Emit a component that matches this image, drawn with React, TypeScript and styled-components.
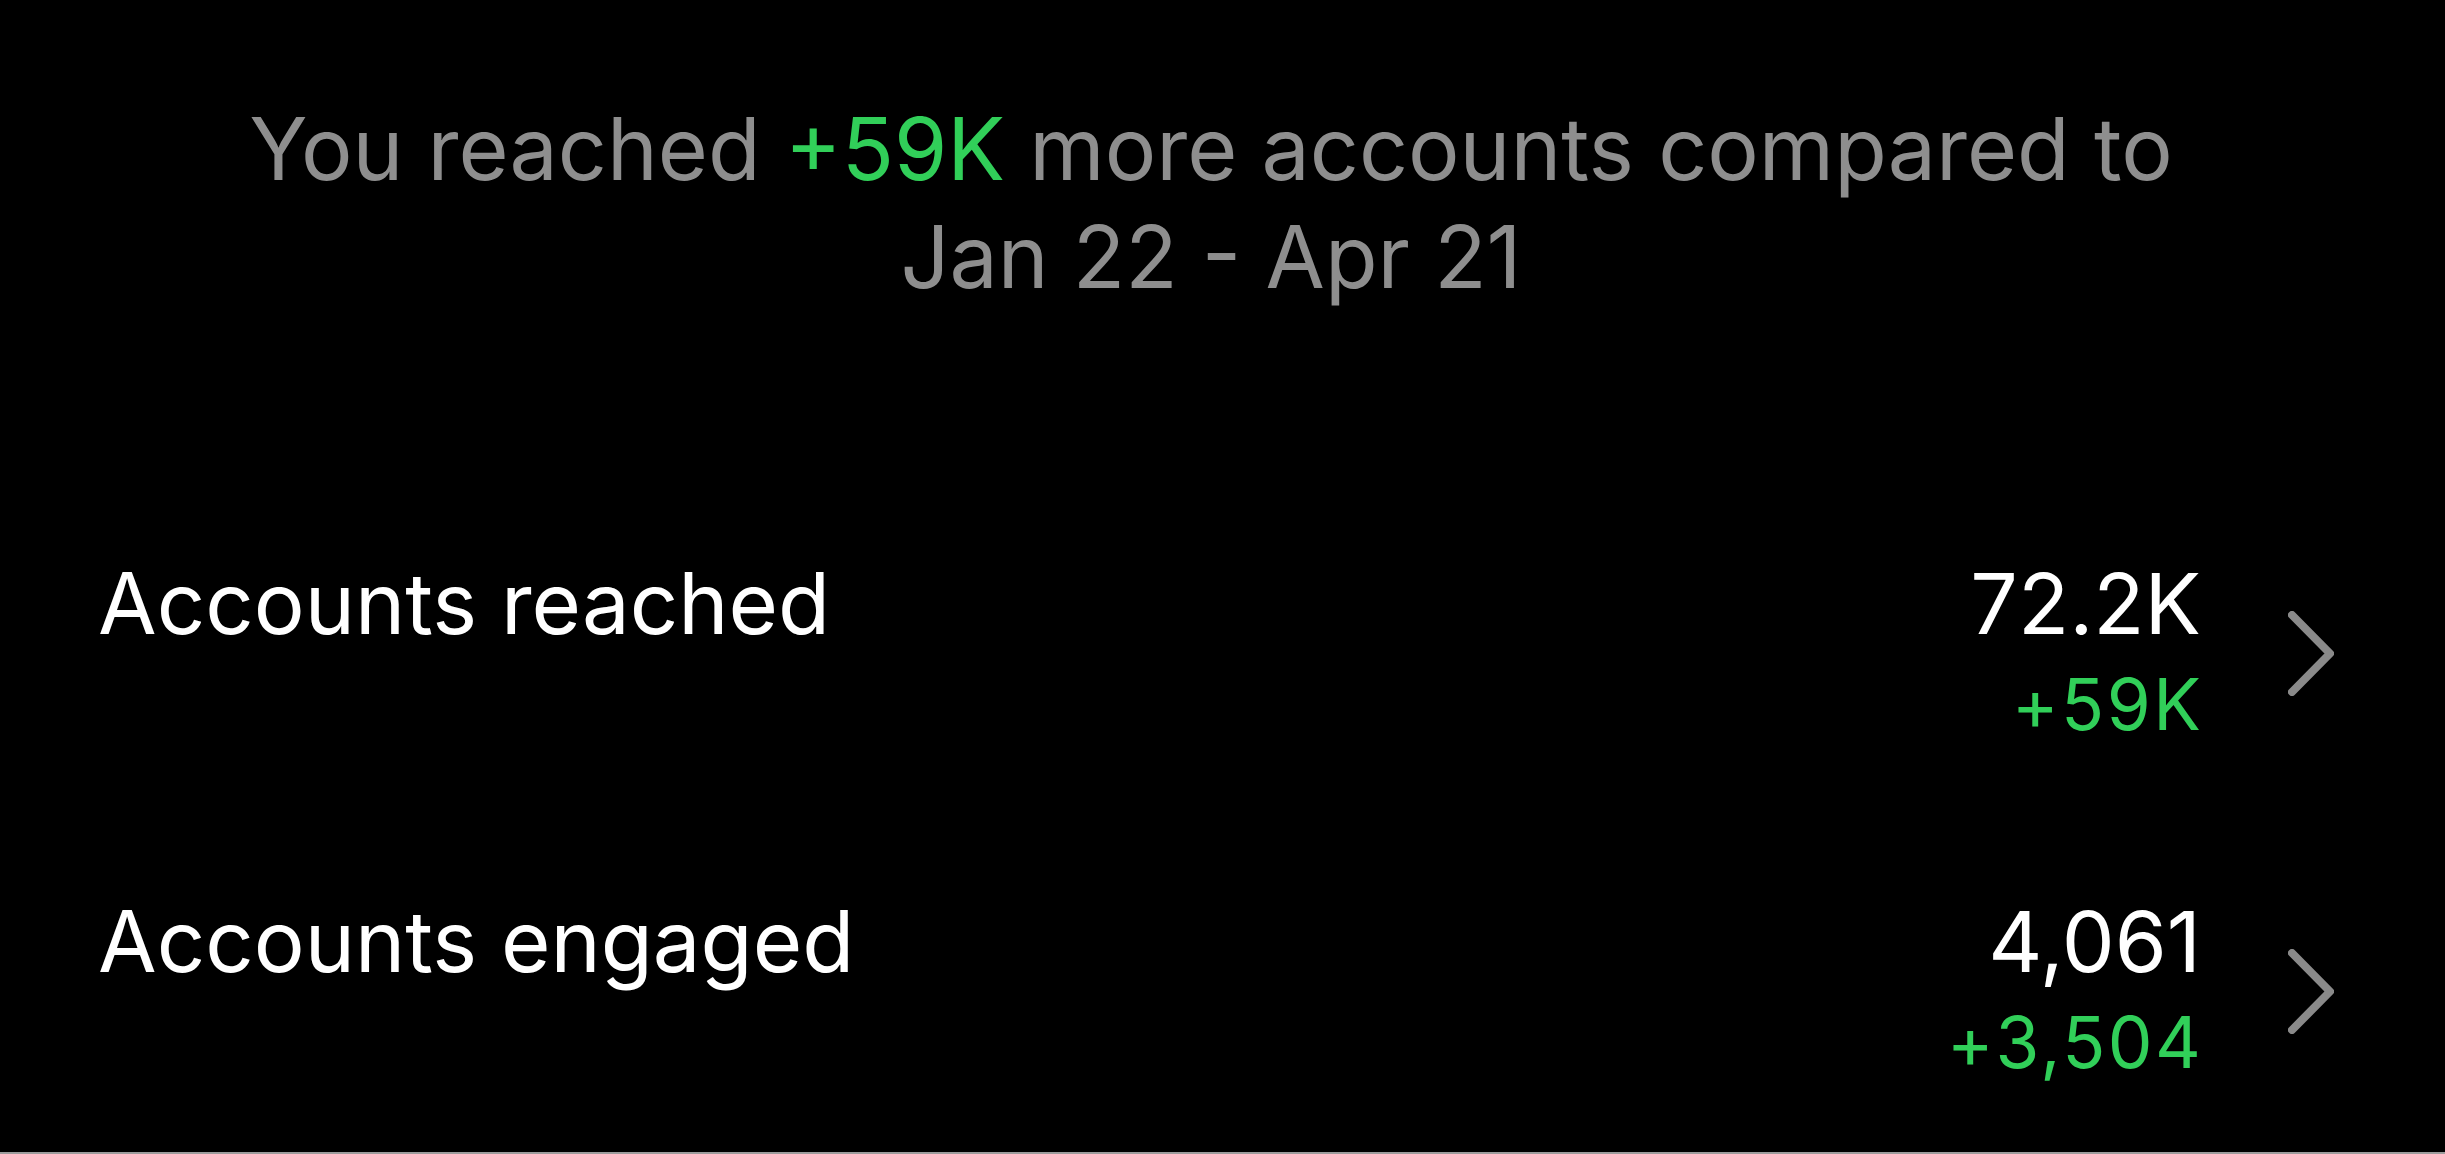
import React from "react";
import styled, { createGlobalStyle } from "styled-components";

const GlobalStyle = createGlobalStyle`
  html, body {
    margin: 0;
    padding: 0;
    background: #000;
  }
  * { box-sizing: border-box; }
`;

const Page = styled.div`
  min-height: 100vh;
  background: #000;
  font-family: Inter, "Noto Sans", "Liberation Sans", sans-serif;
  padding: 95px 111px 0 98px;
  border-bottom: 2px solid #9c9c9c;
  display: flex;
  flex-direction: column;
`;

const Summary = styled.p`
  margin: 0;
  text-align: center;
  color: #8e8e8e;
  font-size: 86px;
  line-height: 108px;
  padding-right: 10px;
`;

const Green = styled.span`
  color: #31cf59;
`;

const List = styled.div`
  margin-top: 242px;
  display: flex;
  flex-direction: column;
  gap: 137px;
`;

const Row = styled.div`
  display: flex;
  align-items: flex-start;
  justify-content: space-between;
`;

const Label = styled.div`
  color: #fff;
  font-size: 85px;
  line-height: 101px;
`;

const Right = styled.div`
  display: flex;
  align-items: center;
  gap: 87px;
`;

const Values = styled.div`
  display: flex;
  flex-direction: column;
  align-items: flex-end;
`;

const Value = styled.div`
  color: #fff;
  font-size: 84px;
  line-height: 101px;
`;

const Delta = styled.div`
  color: #31cf59;
  font-size: 71px;
  line-height: 100px;
  letter-spacing: 2.5px;
  margin-right: -2.5px;
`;

const Chevron = () => (
  <svg width="46" height="85" viewBox="0 0 46 85" fill="none">
    <polyline
      points="4,4 42,42.5 4,81"
      stroke="#8a8a8a"
      strokeWidth="8"
      strokeLinecap="round"
      strokeLinejoin="round"
    />
  </svg>
);

const rows = [
  { label: "Accounts reached", value: "72.2K", delta: "+59K" },
  { label: "Accounts engaged", value: "4,061", delta: "+3,504" },
];

export default function App() {
  return (
    <>
      <GlobalStyle />
      <Page>
        <Summary>
          You reached <Green>+59K</Green> more accounts compared to
          <br />
          Jan 22 - Apr 21
        </Summary>
        <List>
          {rows.map((r) => (
            <Row key={r.label}>
              <Label>{r.label}</Label>
              <Right>
                <Values>
                  <Value>{r.value}</Value>
                  <Delta>{r.delta}</Delta>
                </Values>
                <Chevron />
              </Right>
            </Row>
          ))}
        </List>
      </Page>
    </>
  );
}
